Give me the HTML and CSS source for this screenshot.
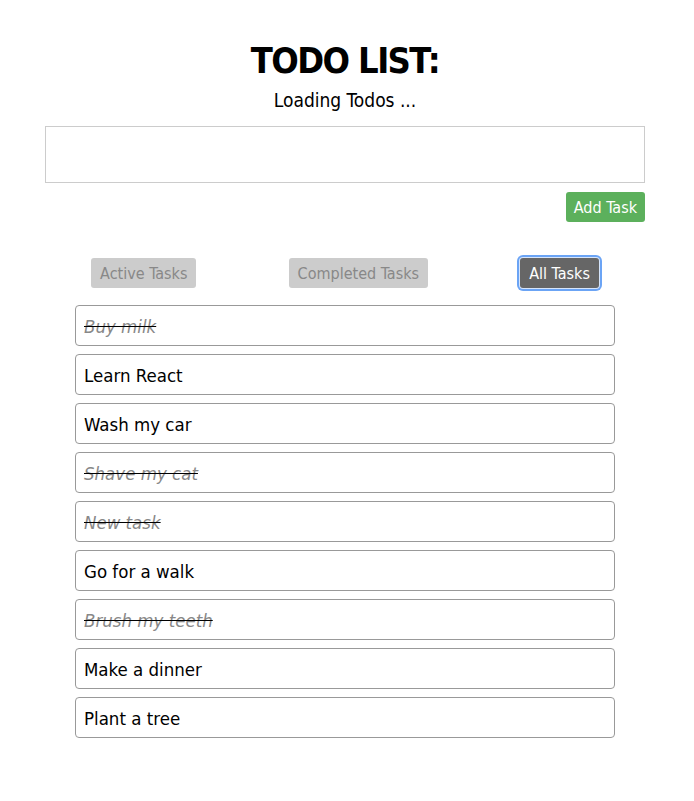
FILE: index.html
```html
<!DOCTYPE html>
<html>
<head>
<meta charset="utf-8">
<link rel="stylesheet" href="styles.css">
</head>
<body>
<div class="app">
  <h1 class="title">TODO LIST:</h1>
  <p class="status">Loading Todos ...</p>
  <div class="entry">
    <input class="entry-input" type="text">
    <button class="add-btn">Add Task</button>
  </div>
  <div class="filters">
    <button class="filter">Active Tasks</button>
    <button class="filter">Completed Tasks</button>
    <button class="filter filter-active">All Tasks</button>
  </div>
  <ul class="tasks">
    <li class="task done"><span>Buy milk</span></li>
    <li class="task"><span>Learn React</span></li>
    <li class="task"><span>Wash my car</span></li>
    <li class="task done"><span>Shave my cat</span></li>
    <li class="task done"><span>New task</span></li>
    <li class="task"><span>Go for a walk</span></li>
    <li class="task done"><span>Brush my teeth</span></li>
    <li class="task"><span>Make a dinner</span></li>
    <li class="task"><span>Plant a tree</span></li>
  </ul>
</div>
</body>
</html>
```
FILE: styles.css
```css
html, body {
  margin: 0;
  background: #fff;
}
body {
  padding-right: 4px;
  font-family: "DejaVu Sans Condensed", "DejaVu Sans", sans-serif;
  color: #000;
}
.app {
  width: 600px;
  margin: 0 auto;
  padding-top: 40px;
}
.title {
  margin: 0;
  font-size: 36px;
  line-height: 42px;
  font-weight: bold;
  letter-spacing: -1.6px;
  text-align: center;
}
.status {
  margin: 7px 0 0;
  font-size: 19px;
  line-height: 22px;
  text-align: center;
}
.entry {
  margin-top: 15px;
  display: flex;
  flex-direction: column;
  align-items: flex-end;
}
.entry-input {
  box-sizing: border-box;
  width: 600px;
  height: 57px;
  margin: 0;
  border: 1px solid #ccc;
  border-radius: 0;
  outline: none;
  font: inherit;
}
.add-btn {
  margin-top: 9px;
  height: 30px;
  padding: 0 8px;
  border: none;
  border-radius: 3px;
  background: #5cb05c;
  color: #fff;
  font-family: inherit;
  font-size: 16px;
}
.filters {
  margin-top: 36px;
  display: flex;
  justify-content: space-around;
  align-items: center;
}
.filter {
  height: 30px;
  padding: 0 9px;
  border: none;
  border-radius: 3px;
  background: #cccccc;
  color: #888;
  font-family: inherit;
  font-size: 16px;
}
.filter-active {
  background: #666;
  color: #fff;
  outline: none;
  box-shadow: 0 0 0 1px #d6e5fb, 0 0 0 3px #6ba4f5;
}
.tasks {
  list-style: none;
  margin: 17px auto 0;
  padding: 0;
  width: 540px;
  display: flex;
  flex-direction: column;
  gap: 8px;
}
.task {
  box-sizing: border-box;
  height: 41px;
  border: 1px solid #999;
  border-radius: 4px;
  padding: 1px 8px 0;
  display: flex;
  align-items: center;
  font-size: 18.5px;
}
.task.done span {
  font-style: italic;
  color: #888;
  text-decoration: line-through;
  text-decoration-color: #000;
}
```
